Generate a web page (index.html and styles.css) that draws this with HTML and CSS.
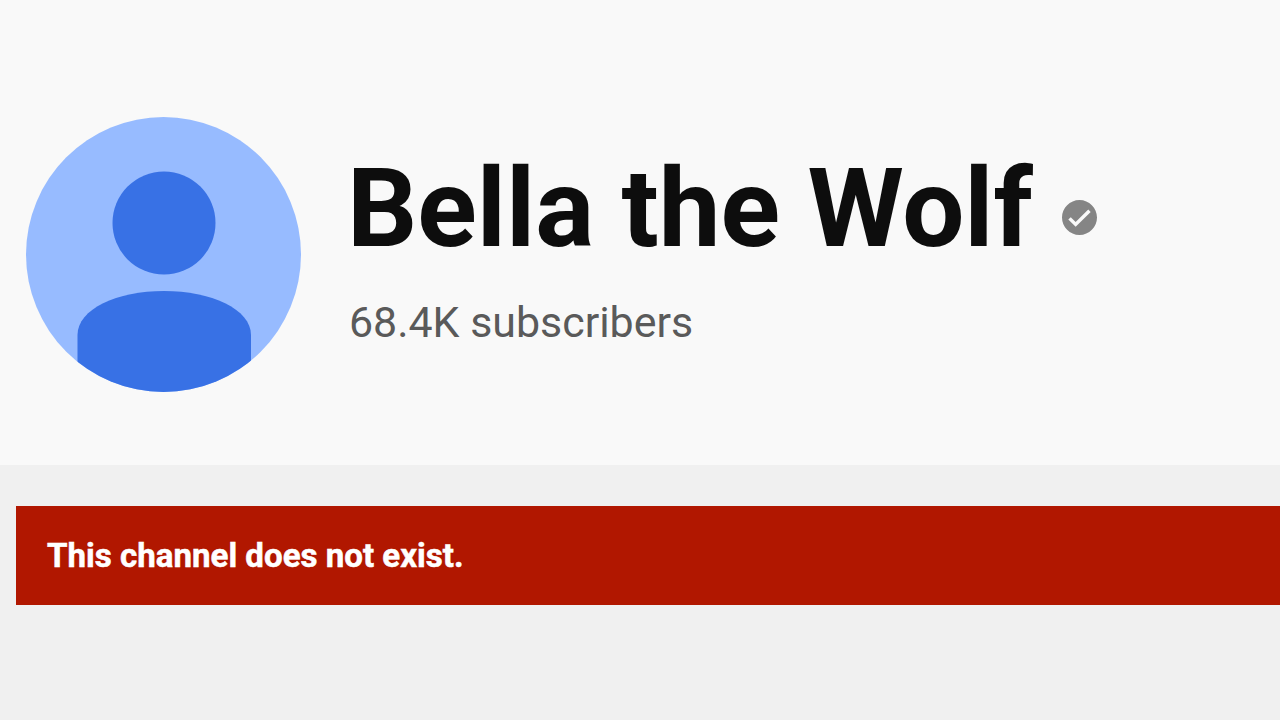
FILE: index.html
```html
<!DOCTYPE html>
<html lang="en">
<head>
<meta charset="UTF-8">
<meta name="viewport" content="width=device-width, initial-scale=1.0">
<title>Bella the Wolf</title>
<link rel="stylesheet" href="styles.css">
</head>
<body>
<header class="channel-header">
  <svg class="avatar" viewBox="0 0 275 275" aria-hidden="true">
    <clipPath id="avatar-clip"><circle cx="137.5" cy="137.5" r="137.5"/></clipPath>
    <circle cx="137.5" cy="137.5" r="137.5" fill="#97bbff"/>
    <g clip-path="url(#avatar-clip)" fill="#3871e5">
      <circle cx="138" cy="106" r="51.5"/>
      <path d="M51.5 275V218C51.5 192 91 174 138 174S225 192 225 218V275Z"/>
    </g>
  </svg>
  <div class="channel-info">
    <div class="channel-title">
      <h1>Bella the Wolf</h1>
      <svg class="badge" viewBox="2 2 20 20" aria-label="Verified">
        <path fill="#858585" d="M12 2C6.5 2 2 6.5 2 12s4.5 10 10 10 10-4.5 10-10S17.5 2 12 2zM9.8 17.3l-4.2-4.1L7 11.8l2.8 2.7L17 7.4l1.4 1.4-8.6 8.5z"/>
      </svg>
    </div>
    <p class="subscribers">68.4K subscribers</p>
  </div>
</header>
<main class="content">
  <div class="alert">This channel does not exist.</div>
</main>
</body>
</html>
```

FILE: styles.css
```css
* {
  box-sizing: border-box;
}
body {
  margin: 0;
  height: 100vh;
  overflow: hidden;
  font-family: Roboto, sans-serif;
  background-color: #f0f0f0;
}
.channel-header {
  display: flex;
  height: 465px;
  padding: 117px 0 0 26px;
  background-color: #f9f9f9;
}
.avatar {
  flex: none;
  width: 275px;
  height: 275px;
}
.channel-info {
  padding: 26px 0 0 48px;
}
.channel-title {
  display: flex;
  align-items: center;
}
h1 {
  margin: 0 0 0 -2px;
  font-size: 110.2px;
  font-weight: 700;
  line-height: 132px;
  white-space: nowrap;
  color: #0d0d0d;
}
.badge {
  width: 35px;
  height: 35px;
  margin: 16px 0 0 29px;
}
.subscribers {
  margin: 21px 0 0;
  font-size: 42.9px;
  line-height: 52px;
  color: #5a5a5a;
}
.content {
  padding: 41px 0 0 16px;
}
.alert {
  height: 99px;
  padding-left: 31px;
  font-size: 33.1px;
  font-weight: 700;
  line-height: 99px;
  color: #fff;
  background-color: #b11700;
  -webkit-text-stroke: 0.5px #fff;
}
```
